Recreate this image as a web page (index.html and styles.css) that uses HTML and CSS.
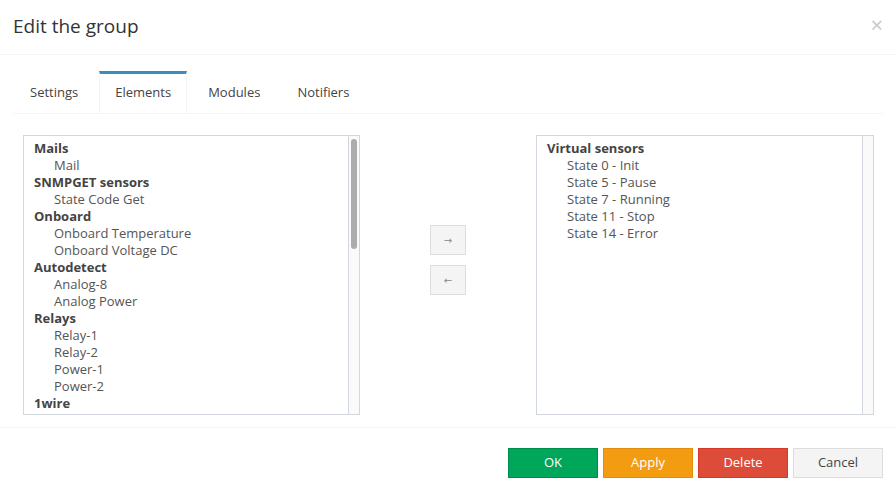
FILE: index.html
```html
<!DOCTYPE html>
<html lang="en">
<head>
    <meta charset="UTF-8">
    <title>Edit the group</title>
    <link rel="stylesheet" href="styles.css">
</head>
<body>
    <div class="modal">
        <div class="modal-header">
            <h4 class="modal-title">Edit the group</h4>
            <span class="close">&times;</span>
        </div>

        <div class="modal-body">
            <ul class="nav-tabs">
                <li class="tab">Settings</li>
                <li class="tab active">Elements</li>
                <li class="tab">Modules</li>
                <li class="tab">Notifiers</li>
            </ul>

            <div class="tab-content">
                <div class="list-box">
                    <div class="list-items">
                        <div class="group">Mails</div>
                        <div class="item">Mail</div>
                        <div class="group">SNMPGET sensors</div>
                        <div class="item">State Code Get</div>
                        <div class="group">Onboard</div>
                        <div class="item">Onboard Temperature</div>
                        <div class="item">Onboard Voltage DC</div>
                        <div class="group">Autodetect</div>
                        <div class="item">Analog-8</div>
                        <div class="item">Analog Power</div>
                        <div class="group">Relays</div>
                        <div class="item">Relay-1</div>
                        <div class="item">Relay-2</div>
                        <div class="item">Power-1</div>
                        <div class="item">Power-2</div>
                        <div class="group">1wire</div>
                    </div>
                    <div class="scrollbar">
                        <div class="thumb"></div>
                    </div>
                </div>

                <div class="move-buttons">
                    <button class="move-btn">&rarr;</button>
                    <button class="move-btn">&larr;</button>
                </div>

                <div class="list-box">
                    <div class="list-items">
                        <div class="group">Virtual sensors</div>
                        <div class="item">State 0 - Init</div>
                        <div class="item">State 5 - Pause</div>
                        <div class="item">State 7 - Running</div>
                        <div class="item">State 11 - Stop</div>
                        <div class="item">State 14 - Error</div>
                    </div>
                    <div class="scrollbar"></div>
                </div>
            </div>
        </div>

        <div class="modal-footer">
            <button class="btn btn-success">OK</button>
            <button class="btn btn-warning">Apply</button>
            <button class="btn btn-danger">Delete</button>
            <button class="btn btn-default">Cancel</button>
        </div>
    </div>
</body>
</html>
```

FILE: styles.css
```css
body {
    margin: 0;
    font-family: "Open Sans", "DejaVu Sans", sans-serif;
    color: #444;
    background: #fff;
}
.modal {
    width: 896px;
    height: 491px;
    overflow: hidden;
}
.modal-header {
    height: 55px;
    padding: 0 13px;
    box-sizing: border-box;
    border-bottom: 1px solid #f4f4f4;
    display: flex;
    align-items: center;
    justify-content: space-between;
}
.modal-title {
    margin: 0;
    font-size: 19px;
    font-weight: normal;
    color: #333;
    padding-bottom: 3px;
}
.close {
    font-size: 22px;
    color: #c8c8c8;
    line-height: 1;
    padding-bottom: 6px;
}
.modal-body {
    padding: 16px 13px 12px;
}
.nav-tabs {
    list-style: none;
    margin: 0;
    padding: 0 0 0 1px;
    display: flex;
    height: 43px;
    box-sizing: border-box;
    border-bottom: 1px solid #f4f4f4;
}
.tab {
    font-size: 13px;
    padding: 0 15px;
    margin-right: 5px;
    height: 41px;
    box-sizing: border-box;
    line-height: 36px;
    border: 1px solid transparent;
    border-top: 3px solid transparent;
    border-bottom: 0;
    color: #444;
}
.tab.active {
    border-top-color: #3c8dbc;
    border-left-color: #f4f4f4;
    border-right-color: #f4f4f4;
    background: #fff;
    margin-bottom: -1px;
    height: 42px;
}
.tab-content {
    display: grid;
    grid-template-columns: 337px 1fr 338px;
    padding: 21px 9px 0 10px;
}
.list-box {
    height: 280px;
    box-sizing: border-box;
    border: 1px solid #d2d6de;
    display: flex;
}
.list-items {
    flex: 1;
    overflow: hidden;
    padding: 4px 10px 0;
    font-size: 13px;
    line-height: 17px;
}
.group {
    font-weight: bold;
    color: #444;
}
.item {
    padding-left: 20px;
    color: #555;
}
.scrollbar {
    width: 11px;
    border-left: 1px solid #d2d6de;
    background: #fafafa;
    padding: 3px 0 0 2px;
    box-sizing: border-box;
}
.thumb {
    width: 6px;
    height: 110px;
    border-radius: 3px;
    background: #acacac;
}
.move-buttons {
    display: flex;
    flex-direction: column;
    align-items: center;
    gap: 10px;
    padding-top: 90px;
}
.move-btn {
    width: 36px;
    height: 30px;
    background: #f4f4f4;
    border: 1px solid #ddd;
    color: #888;
    font-size: 10px;
    padding: 0;
    font-family: "DejaVu Sans", sans-serif;
}
.modal-footer {
    border-top: 1px solid #f4f4f4;
    padding: 20px 13px 0;
    display: flex;
    justify-content: flex-end;
    gap: 5px;
}
.btn {
    width: 90px;
    height: 30px;
    font-family: "Open Sans", sans-serif;
    font-size: 13px;
    color: #fff;
    border: 1px solid transparent;
    padding: 0 0 2px;
}
.btn-success {
    background: #00a65a;
    border-color: #008d4c;
}
.btn-warning {
    background: #f39c12;
    border-color: #e08e0b;
}
.btn-danger {
    background: #dd4b39;
    border-color: #d73925;
}
.btn-default {
    background: #f4f4f4;
    border-color: #ddd;
    color: #444;
}
```
